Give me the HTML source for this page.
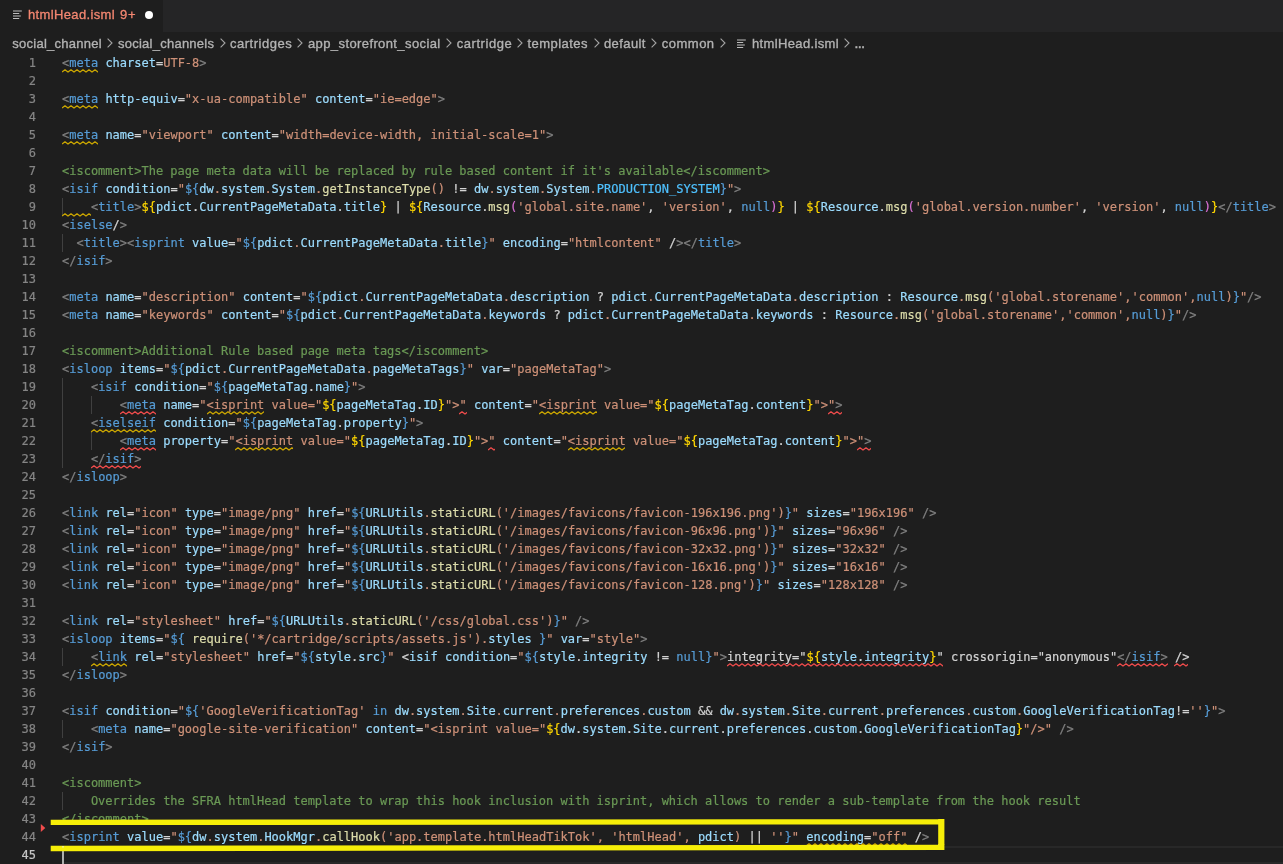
<!DOCTYPE html>
<html lang="en"><head><meta charset="utf-8"><title>htmlHead.isml</title>
<style>
html,body{margin:0;padding:0;background:#1e1e1e;}
body{width:1283px;height:864px;overflow:hidden;position:relative;font-family:"Liberation Sans",sans-serif;}
.tabs{will-change:transform;-webkit-text-stroke:0.3px;position:absolute;left:0;top:0;width:1283px;height:32px;background:#252526;}
.tab{position:absolute;left:0;top:0;width:163px;height:32px;background:#1e1e1e;}
.tab .nm{position:absolute;top:7px;font-size:13px;line-height:16px;color:#f48771;white-space:nowrap;}
.tab .bd{position:absolute;top:7px;font-size:13px;line-height:16px;color:#f48771;white-space:nowrap;}
.tab .dot{position:absolute;left:145px;top:11px;width:8px;height:8px;border-radius:50%;background:#fff;}
.ficon{position:absolute;}
.ficon b{position:absolute;left:0;height:1px;background:#c5c5c5;}
.crumbs{will-change:transform;-webkit-text-stroke:0.35px;position:absolute;left:0;top:32px;width:1283px;height:22px;font-size:13px;line-height:22px;color:#b2b2b2;white-space:nowrap;}
.crumbs span{position:absolute;top:1px;}
.editor{position:absolute;left:0;top:0;width:1283px;height:864px;font-family:"DejaVu Sans Mono","Liberation Mono",monospace;font-size:12px;will-change:transform;-webkit-text-stroke:0.2px;}
.row{position:absolute;left:0;width:1283px;height:18px;line-height:18px;white-space:pre;}
.ln{position:absolute;left:0;top:0;width:36px;text-align:right;color:#858585;}
.ln.cur{color:#c6c6c6;}
.cd{position:absolute;left:62px;top:0;color:#d4d4d4;letter-spacing:0px;}
.cd i{font-style:normal;}
.g{color:#808080}.t{color:#569cd6}.a{color:#9cdcfe}.s{color:#ce9178}.c{color:#6a9955}
.f{color:#dcdcaa}.y{color:#ffd700}.p{color:#da70d6}.k{color:#4fc1ff}
u{text-decoration:none;}
.ig{position:absolute;top:0;width:1px;height:18px;background:#404040;}
.curline{position:absolute;left:62px;top:846px;width:1221px;height:14px;border-top:2px solid #282828;border-bottom:2px solid #282828;}
.cursor{position:absolute;left:62px;top:846px;width:2px;height:18px;background:#aeafad;}
.hl{position:absolute;background:#f5ee0a;}
.sq{position:absolute;overflow:hidden;}
.chev{position:absolute;top:5.9px;overflow:visible;}
.fic{position:absolute;overflow:visible;}
.ov{position:absolute;left:0;top:0;pointer-events:none;}
</style></head>
<body>
<div class="tabs"><div class="tab">
<svg class="fic" style="left:13.2px;top:9.6px" width="10" height="10" viewBox="0 0 10 10"><path d="M0 1H8.8M0 3.5H6.2M0 6H7.8M0 8.5H6.2" fill="none" stroke="#bdbdbd" stroke-width="1.15"/></svg>
<span class="nm" style="left:28px;letter-spacing:0.362px">htmlHead.isml</span><span class="bd" style="left:120px;letter-spacing:0.878px">9+</span><span class="dot"></span>
</div></div>
<div class="crumbs"><span style="left:12.3px;letter-spacing:0.262px">social_channel</span><svg class="chev" style="left:107px" width="6" height="10" viewBox="0 0 6 10"><path d="M0.6 0.6 L5 5 L0.6 9.4" fill="none" stroke="#a4a4a4" stroke-width="1.1"/></svg><span style="left:117.9px;letter-spacing:0.257px">social_channels</span><svg class="chev" style="left:220px" width="6" height="10" viewBox="0 0 6 10"><path d="M0.6 0.6 L5 5 L0.6 9.4" fill="none" stroke="#a4a4a4" stroke-width="1.1"/></svg><span style="left:230px;letter-spacing:0.514px">cartridges</span><svg class="chev" style="left:297.4px" width="6" height="10" viewBox="0 0 6 10"><path d="M0.6 0.6 L5 5 L0.6 9.4" fill="none" stroke="#a4a4a4" stroke-width="1.1"/></svg><span style="left:308px;letter-spacing:0.395px">app_storefront_social</span><svg class="chev" style="left:445.8px" width="6" height="10" viewBox="0 0 6 10"><path d="M0.6 0.6 L5 5 L0.6 9.4" fill="none" stroke="#a4a4a4" stroke-width="1.1"/></svg><span style="left:456.7px;letter-spacing:0.553px">cartridge</span><svg class="chev" style="left:517px" width="6" height="10" viewBox="0 0 6 10"><path d="M0.6 0.6 L5 5 L0.6 9.4" fill="none" stroke="#a4a4a4" stroke-width="1.1"/></svg><span style="left:527.5px;letter-spacing:0.455px">templates</span><svg class="chev" style="left:593.5px" width="6" height="10" viewBox="0 0 6 10"><path d="M0.6 0.6 L5 5 L0.6 9.4" fill="none" stroke="#a4a4a4" stroke-width="1.1"/></svg><span style="left:604px;letter-spacing:0.395px">default</span><svg class="chev" style="left:651.3px" width="6" height="10" viewBox="0 0 6 10"><path d="M0.6 0.6 L5 5 L0.6 9.4" fill="none" stroke="#a4a4a4" stroke-width="1.1"/></svg><span style="left:661.8px;letter-spacing:0.490px">common</span><svg class="chev" style="left:719.7px" width="6" height="10" viewBox="0 0 6 10"><path d="M0.6 0.6 L5 5 L0.6 9.4" fill="none" stroke="#a4a4a4" stroke-width="1.1"/></svg><svg class="fic" style="left:737.3px;top:6.6px" width="10" height="10" viewBox="0 0 10 10"><path d="M0 1H8.8M0 3.5H6.2M0 6H7.8M0 8.5H6.2" fill="none" stroke="#bdbdbd" stroke-width="1.15"/></svg><span style="left:752px;letter-spacing:0.362px">htmlHead.isml</span><svg class="chev" style="left:844.2px" width="6" height="10" viewBox="0 0 6 10"><path d="M0.6 0.6 L5 5 L0.6 9.4" fill="none" stroke="#a4a4a4" stroke-width="1.1"/></svg><span style="left:854.6px;font-size:10.5px;font-weight:bold">…</span></div>

<div class="editor">
<div class="row" style="top:54px"><span class="ln">1</span><span class="cd"><i class="g">&lt;</i><i class="t">meta</i> <i class="a">charset</i>=<i class="s">UTF-8</i><i class="g">&gt;</i></span></div>
<div class="row" style="top:72px"><span class="ln">2</span><span class="cd"></span></div>
<div class="row" style="top:90px"><span class="ln">3</span><span class="cd"><i class="g">&lt;</i><i class="t">meta</i> <i class="a">http-equiv</i>=<i class="s">"x-ua-compatible"</i> <i class="a">content</i>=<i class="s">"ie=edge"</i><i class="g">&gt;</i></span></div>
<div class="row" style="top:108px"><span class="ln">4</span><span class="cd"></span></div>
<div class="row" style="top:126px"><span class="ln">5</span><span class="cd"><i class="g">&lt;</i><i class="t">meta</i> <i class="a">name</i>=<i class="s">"viewport"</i> <i class="a">content</i>=<i class="s">"width=device-width, initial-scale=1"</i><i class="g">&gt;</i></span></div>
<div class="row" style="top:144px"><span class="ln">6</span><span class="cd"></span></div>
<div class="row" style="top:162px"><span class="ln">7</span><span class="cd"><i class="c">&lt;iscomment&gt;The page meta data will be replaced by rule based content if it's available&lt;/iscomment&gt;</i></span></div>
<div class="row" style="top:180px"><span class="ln">8</span><span class="cd"><i class="g">&lt;</i><i class="t">isif</i> <i class="a">condition</i>=<i class="s">"</i><i class="t">${</i><i class="a">dw</i><i class="s">.</i><i class="a">system</i><i class="s">.</i><i class="a">System</i><i class="s">.</i><i class="f">getInstanceType</i><i class="s">()</i> != <i class="a">dw</i><i class="s">.</i><i class="a">system</i><i class="s">.</i><i class="a">System</i><i class="s">.</i><i class="k">PRODUCTION_SYSTEM</i><i class="t">}</i><i class="s">"</i><i class="g">&gt;</i></span></div>
<div class="row" style="top:198px"><span class="ln">9</span><b class="ig" style="left:62px"></b><span class="cd">    <i class="g">&lt;</i><i class="t">title</i><i class="g">&gt;</i><i class="y">${</i><i class="a">pdict</i>.<i class="a">CurrentPageMetaData</i>.<i class="a">title</i><i class="y">}</i> | <i class="y">${</i><i class="a">Resource</i>.<i class="f">msg</i><i class="p">(</i><i class="s">'global.site.name'</i>, <i class="s">'version'</i>, <i class="t">null</i><i class="p">)</i><i class="y">}</i> | <i class="y">${</i><i class="a">Resource</i>.<i class="f">msg</i><i class="p">(</i><i class="s">'global.version.number'</i>, <i class="s">'version'</i>, <i class="t">null</i><i class="p">)</i><i class="y">}</i><i class="g">&lt;/</i><i class="t">title</i><i class="g">&gt;</i></span></div>
<div class="row" style="top:216px"><span class="ln">10</span><span class="cd"><i class="g">&lt;</i><i class="t">iselse</i>/<i class="g">&gt;</i></span></div>
<div class="row" style="top:234px"><span class="ln">11</span><b class="ig" style="left:62px"></b><span class="cd">  <i class="g">&lt;</i><i class="t">title</i><i class="g">&gt;</i><i class="g">&lt;</i><i class="t">isprint</i> <i class="a">value</i>=<i class="s">"</i><i class="t">${</i><i class="a">pdict</i><i class="s">.</i><i class="a">CurrentPageMetaData</i><i class="s">.</i><i class="a">title</i><i class="t">}</i><i class="s">"</i> <i class="a">encoding</i>=<i class="s">"htmlcontent"</i> /<i class="g">&gt;</i><i class="g">&lt;/</i><i class="t">title</i><i class="g">&gt;</i></span></div>
<div class="row" style="top:252px"><span class="ln">12</span><span class="cd"><i class="g">&lt;/</i><i class="t">isif</i><i class="g">&gt;</i></span></div>
<div class="row" style="top:270px"><span class="ln">13</span><span class="cd"></span></div>
<div class="row" style="top:288px"><span class="ln">14</span><span class="cd"><i class="g">&lt;</i><i class="t">meta</i> <i class="a">name</i>=<i class="s">"description"</i> <i class="a">content</i>=<i class="s">"</i><i class="t">${</i><i class="a">pdict</i><i class="s">.</i><i class="a">CurrentPageMetaData</i><i class="s">.</i><i class="a">description</i> ? <i class="a">pdict</i><i class="s">.</i><i class="a">CurrentPageMetaData</i><i class="s">.</i><i class="a">description</i> : <i class="a">Resource</i><i class="s">.</i><i class="f">msg</i><i class="s">('global.storename','common',</i><i class="t">null</i><i class="s">)</i><i class="t">}</i><i class="s">"</i><i class="g">/&gt;</i></span></div>
<div class="row" style="top:306px"><span class="ln">15</span><span class="cd"><i class="g">&lt;</i><i class="t">meta</i> <i class="a">name</i>=<i class="s">"keywords"</i> <i class="a">content</i>=<i class="s">"</i><i class="t">${</i><i class="a">pdict</i><i class="s">.</i><i class="a">CurrentPageMetaData</i><i class="s">.</i><i class="a">keywords</i> ? <i class="a">pdict</i><i class="s">.</i><i class="a">CurrentPageMetaData</i><i class="s">.</i><i class="a">keywords</i> : <i class="a">Resource</i><i class="s">.</i><i class="f">msg</i><i class="s">('global.storename','common',</i><i class="t">null</i><i class="s">)</i><i class="t">}</i><i class="s">"</i><i class="g">/&gt;</i></span></div>
<div class="row" style="top:324px"><span class="ln">16</span><span class="cd"></span></div>
<div class="row" style="top:342px"><span class="ln">17</span><span class="cd"><i class="c">&lt;iscomment&gt;Additional Rule based page meta tags&lt;/iscomment&gt;</i></span></div>
<div class="row" style="top:360px"><span class="ln">18</span><span class="cd"><i class="g">&lt;</i><i class="t">isloop</i> <i class="a">items</i>=<i class="s">"</i><i class="t">${</i><i class="a">pdict</i><i class="s">.</i><i class="a">CurrentPageMetaData</i><i class="s">.</i><i class="a">pageMetaTags</i><i class="t">}</i><i class="s">"</i> <i class="a">var</i>=<i class="s">"pageMetaTag"</i><i class="g">&gt;</i></span></div>
<div class="row" style="top:378px"><span class="ln">19</span><b class="ig" style="left:62px"></b><span class="cd">    <i class="g">&lt;</i><i class="t">isif</i> <i class="a">condition</i>=<i class="s">"</i><i class="t">${</i><i class="a">pageMetaTag</i>.<i class="a">name</i><i class="t">}</i><i class="s">"</i><i class="g">&gt;</i></span></div>
<div class="row" style="top:396px"><span class="ln">20</span><b class="ig" style="left:62px"></b><b class="ig" style="left:91px"></b><span class="cd">        <i class="g">&lt;</i><i class="t">meta</i> <i class="a">name</i>=<i class="s">"</i><i class="s">&lt;isprint</i><i class="s"> value="</i><i class="y">${</i><i class="a">pageMetaTag</i>.<i class="a">ID</i><i class="y">}</i><i class="s">"&gt;</i><i class="s">"</i> <i class="a">content</i>=<i class="s">"</i><i class="s">&lt;isprint</i><i class="s"> value="</i><i class="y">${</i><i class="a">pageMetaTag</i>.<i class="a">content</i><i class="y">}</i><i class="s">"&gt;</i><i class="s">"</i><i class="g">&gt;</i></span></div>
<div class="row" style="top:414px"><span class="ln">21</span><b class="ig" style="left:62px"></b><span class="cd">    <i class="g">&lt;</i><i class="t">iselseif</i> <i class="a">condition</i>=<i class="s">"</i><i class="t">${</i><i class="a">pageMetaTag</i>.<i class="a">property</i><i class="t">}</i><i class="s">"</i><i class="g">&gt;</i></span></div>
<div class="row" style="top:432px"><span class="ln">22</span><b class="ig" style="left:62px"></b><b class="ig" style="left:91px"></b><span class="cd">        <i class="g">&lt;</i><i class="t">meta</i> <i class="a">property</i>=<i class="s">"</i><i class="s">&lt;isprint</i><i class="s"> value="</i><i class="y">${</i><i class="a">pageMetaTag</i>.<i class="a">ID</i><i class="y">}</i><i class="s">"&gt;</i><i class="s">"</i> <i class="a">content</i>=<i class="s">"</i><i class="s">&lt;isprint</i><i class="s"> value="</i><i class="y">${</i><i class="a">pageMetaTag</i>.<i class="a">content</i><i class="y">}</i><i class="s">"&gt;</i><i class="s">"</i><i class="g">&gt;</i></span></div>
<div class="row" style="top:450px"><span class="ln">23</span><b class="ig" style="left:62px"></b><span class="cd">    <i class="g">&lt;/</i><i class="t">isif</i><i class="g">&gt;</i></span></div>
<div class="row" style="top:468px"><span class="ln">24</span><span class="cd"><i class="g">&lt;/</i><i class="t">isloop</i><i class="g">&gt;</i></span></div>
<div class="row" style="top:486px"><span class="ln">25</span><span class="cd"></span></div>
<div class="row" style="top:504px"><span class="ln">26</span><span class="cd"><i class="g">&lt;</i><i class="t">link</i> <i class="a">rel</i>=<i class="s">"icon"</i> <i class="a">type</i>=<i class="s">"image/png"</i> <i class="a">href</i>=<i class="s">"</i><i class="t">${</i><i class="a">URLUtils</i><i class="s">.</i><i class="f">staticURL</i><i class="s">('/images/favicons/favicon-196x196.png')</i><i class="t">}</i><i class="s">"</i> <i class="a">sizes</i>=<i class="s">"196x196"</i><i class="g"> /&gt;</i></span></div>
<div class="row" style="top:522px"><span class="ln">27</span><span class="cd"><i class="g">&lt;</i><i class="t">link</i> <i class="a">rel</i>=<i class="s">"icon"</i> <i class="a">type</i>=<i class="s">"image/png"</i> <i class="a">href</i>=<i class="s">"</i><i class="t">${</i><i class="a">URLUtils</i><i class="s">.</i><i class="f">staticURL</i><i class="s">('/images/favicons/favicon-96x96.png')</i><i class="t">}</i><i class="s">"</i> <i class="a">sizes</i>=<i class="s">"96x96"</i><i class="g"> /&gt;</i></span></div>
<div class="row" style="top:540px"><span class="ln">28</span><span class="cd"><i class="g">&lt;</i><i class="t">link</i> <i class="a">rel</i>=<i class="s">"icon"</i> <i class="a">type</i>=<i class="s">"image/png"</i> <i class="a">href</i>=<i class="s">"</i><i class="t">${</i><i class="a">URLUtils</i><i class="s">.</i><i class="f">staticURL</i><i class="s">('/images/favicons/favicon-32x32.png')</i><i class="t">}</i><i class="s">"</i> <i class="a">sizes</i>=<i class="s">"32x32"</i><i class="g"> /&gt;</i></span></div>
<div class="row" style="top:558px"><span class="ln">29</span><span class="cd"><i class="g">&lt;</i><i class="t">link</i> <i class="a">rel</i>=<i class="s">"icon"</i> <i class="a">type</i>=<i class="s">"image/png"</i> <i class="a">href</i>=<i class="s">"</i><i class="t">${</i><i class="a">URLUtils</i><i class="s">.</i><i class="f">staticURL</i><i class="s">('/images/favicons/favicon-16x16.png')</i><i class="t">}</i><i class="s">"</i> <i class="a">sizes</i>=<i class="s">"16x16"</i><i class="g"> /&gt;</i></span></div>
<div class="row" style="top:576px"><span class="ln">30</span><span class="cd"><i class="g">&lt;</i><i class="t">link</i> <i class="a">rel</i>=<i class="s">"icon"</i> <i class="a">type</i>=<i class="s">"image/png"</i> <i class="a">href</i>=<i class="s">"</i><i class="t">${</i><i class="a">URLUtils</i><i class="s">.</i><i class="f">staticURL</i><i class="s">('/images/favicons/favicon-128.png')</i><i class="t">}</i><i class="s">"</i> <i class="a">sizes</i>=<i class="s">"128x128"</i><i class="g"> /&gt;</i></span></div>
<div class="row" style="top:594px"><span class="ln">31</span><span class="cd"></span></div>
<div class="row" style="top:612px"><span class="ln">32</span><span class="cd"><i class="g">&lt;</i><i class="t">link</i> <i class="a">rel</i>=<i class="s">"stylesheet"</i> <i class="a">href</i>=<i class="s">"</i><i class="t">${</i><i class="a">URLUtils</i><i class="s">.</i><i class="f">staticURL</i><i class="s">('/css/global.css')</i><i class="t">}</i><i class="s">"</i><i class="g"> /&gt;</i></span></div>
<div class="row" style="top:630px"><span class="ln">33</span><span class="cd"><i class="g">&lt;</i><i class="t">isloop</i> <i class="a">items</i>=<i class="s">"</i><i class="t">${</i> <i class="f">require</i><i class="s">('*/cartridge/scripts/assets.js').</i><i class="a">styles</i> <i class="t">}</i><i class="s">"</i> <i class="a">var</i>=<i class="s">"style"</i><i class="g">&gt;</i></span></div>
<div class="row" style="top:648px"><span class="ln">34</span><b class="ig" style="left:62px"></b><span class="cd">    <i class="g">&lt;</i><i class="t">link</i> <i class="a">rel</i>=<i class="s">"stylesheet"</i> <i class="a">href</i>=<i class="s">"</i><i class="t">${</i><i class="a">style</i>.<i class="a">src</i><i class="t">}</i><i class="s">"</i> &lt;<i class="a">isif</i> <i class="a">condition</i>=<i class="s">"</i><i class="t">${</i><i class="a">style</i>.<i class="a">integrity</i> != <i class="t">null</i><i class="t">}</i><i class="s">"</i><i class="g">&gt;</i>integrity="<i class="y">${</i><i class="a">style</i>.<i class="a">integrity</i><i class="y">}</i>" crossorigin="anonymous"<i class="g">&lt;/</i><i class="t">isif</i><i class="g">&gt;</i> /&gt;</span></div>
<div class="row" style="top:666px"><span class="ln">35</span><span class="cd"><i class="g">&lt;/</i><i class="t">isloop</i><i class="g">&gt;</i></span></div>
<div class="row" style="top:684px"><span class="ln">36</span><span class="cd"></span></div>
<div class="row" style="top:702px"><span class="ln">37</span><span class="cd"><i class="g">&lt;</i><i class="t">isif</i> <i class="a">condition</i>=<i class="s">"</i><i class="t">${</i><i class="s">'GoogleVerificationTag'</i> <i class="t">in</i> <i class="a">dw</i><i class="s">.</i><i class="a">system</i><i class="s">.</i><i class="a">Site</i><i class="s">.</i><i class="a">current</i><i class="s">.</i><i class="a">preferences</i><i class="s">.</i><i class="a">custom</i> &amp;&amp; <i class="a">dw</i><i class="s">.</i><i class="a">system</i><i class="s">.</i><i class="a">Site</i><i class="s">.</i><i class="a">current</i><i class="s">.</i><i class="a">preferences</i><i class="s">.</i><i class="a">custom</i><i class="s">.</i><i class="a">GoogleVerificationTag</i>!=<i class="s">''</i><i class="t">}</i><i class="s">"</i><i class="g">&gt;</i></span></div>
<div class="row" style="top:720px"><span class="ln">38</span><b class="ig" style="left:62px"></b><span class="cd">    <i class="g">&lt;</i><i class="t">meta</i> <i class="a">name</i>=<i class="s">"google-site-verification"</i> <i class="a">content</i>=<i class="s">"&lt;isprint value="</i><i class="y">${</i><i class="a">dw</i>.<i class="a">system</i>.<i class="a">Site</i>.<i class="a">current</i>.<i class="a">preferences</i>.<i class="a">custom</i>.<i class="a">GoogleVerificationTag</i><i class="y">}</i><i class="s">"/&gt;"</i><i class="g"> /&gt;</i></span></div>
<div class="row" style="top:738px"><span class="ln">39</span><span class="cd"><i class="g">&lt;/</i><i class="t">isif</i><i class="g">&gt;</i></span></div>
<div class="row" style="top:756px"><span class="ln">40</span><span class="cd"></span></div>
<div class="row" style="top:774px"><span class="ln">41</span><span class="cd"><i class="c">&lt;iscomment&gt;</i></span></div>
<div class="row" style="top:792px"><span class="ln">42</span><b class="ig" style="left:62px"></b><span class="cd"><i class="c">    Overrides the SFRA htmlHead template to wrap this hook inclusion with isprint, which allows to render a sub-template from the hook result</i></span></div>
<div class="row" style="top:810px"><span class="ln">43</span><span class="cd"><i class="c">&lt;/iscomment&gt;</i></span></div>
<div class="row" style="top:828px"><span class="ln">44</span><span class="cd"><i class="g">&lt;</i><i class="t">isprint</i> <i class="a">value</i>=<i class="s">"</i><i class="t">${</i><i class="a">dw</i><i class="s">.</i><i class="a">system</i><i class="s">.</i><i class="a">HookMgr</i><i class="s">.</i><i class="f">callHook</i><i class="s">('app.template.htmlHeadTikTok', 'htmlHead', </i><i class="a">pdict</i><i class="s">)</i> || <i class="s">''</i><i class="t">}</i><i class="s">"</i> <i class="a">encoding</i>=<i class="s">"off"</i> /<i class="g">&gt;</i></span></div>
<div class="row" style="top:846px"><span class="ln cur">45</span><span class="cd"></span></div>
<svg class="sq" style="left:62px;top:68.6px" width="36.12" height="4" viewBox="0 0 36.12 4"><path d="M0 3.0 L3 0.8 L6 3.0 L9 0.8 L12 3.0 L15 0.8 L18 3.0 L21 0.8 L24 3.0 L27 0.8 L30 3.0 L33 0.8 L36 3.0 L39 0.8" fill="none" stroke="#cca700" stroke-width="1.3" stroke-linejoin="round"/></svg><svg class="sq" style="left:62px;top:104.6px" width="36.12" height="4" viewBox="0 0 36.12 4"><path d="M0 3.0 L3 0.8 L6 3.0 L9 0.8 L12 3.0 L15 0.8 L18 3.0 L21 0.8 L24 3.0 L27 0.8 L30 3.0 L33 0.8 L36 3.0 L39 0.8" fill="none" stroke="#cca700" stroke-width="1.3" stroke-linejoin="round"/></svg><svg class="sq" style="left:62px;top:140.6px" width="36.12" height="4" viewBox="0 0 36.12 4"><path d="M0 3.0 L3 0.8 L6 3.0 L9 0.8 L12 3.0 L15 0.8 L18 3.0 L21 0.8 L24 3.0 L27 0.8 L30 3.0 L33 0.8 L36 3.0 L39 0.8" fill="none" stroke="#cca700" stroke-width="1.3" stroke-linejoin="round"/></svg><svg class="sq" style="left:62px;top:212.6px" width="28.9" height="4" viewBox="0 0 28.9 4"><path d="M0 3.0 L3 0.8 L6 3.0 L9 0.8 L12 3.0 L15 0.8 L18 3.0 L21 0.8 L24 3.0 L27 0.8 L30 3.0" fill="none" stroke="#cca700" stroke-width="1.3" stroke-linejoin="round"/></svg><svg class="sq" style="left:119.8px;top:410.6px" width="36.12" height="4" viewBox="0 0 36.12 4"><path d="M0 3.0 L3 0.8 L6 3.0 L9 0.8 L12 3.0 L15 0.8 L18 3.0 L21 0.8 L24 3.0 L27 0.8 L30 3.0 L33 0.8 L36 3.0 L39 0.8" fill="none" stroke="#f14c4c" stroke-width="1.3" stroke-linejoin="round"/></svg><svg class="sq" style="left:206.5px;top:410.6px" width="57.79" height="4" viewBox="0 0 57.79 4"><path d="M0 3.0 L3 0.8 L6 3.0 L9 0.8 L12 3.0 L15 0.8 L18 3.0 L21 0.8 L24 3.0 L27 0.8 L30 3.0 L33 0.8 L36 3.0 L39 0.8 L42 3.0 L45 0.8 L48 3.0 L51 0.8 L54 3.0 L57 0.8 L60 3.0" fill="none" stroke="#cca700" stroke-width="1.3" stroke-linejoin="round"/></svg><svg class="sq" style="left:459.3px;top:410.6px" width="7.224" height="4" viewBox="0 0 7.224 4"><path d="M0 3.0 L3 0.8 L6 3.0 L9 0.8" fill="none" stroke="#f14c4c" stroke-width="1.3" stroke-linejoin="round"/></svg><svg class="sq" style="left:538.8px;top:410.6px" width="57.79" height="4" viewBox="0 0 57.79 4"><path d="M0 3.0 L3 0.8 L6 3.0 L9 0.8 L12 3.0 L15 0.8 L18 3.0 L21 0.8 L24 3.0 L27 0.8 L30 3.0 L33 0.8 L36 3.0 L39 0.8 L42 3.0 L45 0.8 L48 3.0 L51 0.8 L54 3.0 L57 0.8 L60 3.0" fill="none" stroke="#cca700" stroke-width="1.3" stroke-linejoin="round"/></svg><svg class="sq" style="left:827.7px;top:410.6px" width="14.45" height="4" viewBox="0 0 14.45 4"><path d="M0 3.0 L3 0.8 L6 3.0 L9 0.8 L12 3.0 L15 0.8" fill="none" stroke="#f14c4c" stroke-width="1.3" stroke-linejoin="round"/></svg><svg class="sq" style="left:90.9px;top:428.6px" width="65.02" height="4" viewBox="0 0 65.02 4"><path d="M0 3.0 L3 0.8 L6 3.0 L9 0.8 L12 3.0 L15 0.8 L18 3.0 L21 0.8 L24 3.0 L27 0.8 L30 3.0 L33 0.8 L36 3.0 L39 0.8 L42 3.0 L45 0.8 L48 3.0 L51 0.8 L54 3.0 L57 0.8 L60 3.0 L63 0.8 L66 3.0" fill="none" stroke="#cca700" stroke-width="1.3" stroke-linejoin="round"/></svg><svg class="sq" style="left:119.8px;top:446.6px" width="36.12" height="4" viewBox="0 0 36.12 4"><path d="M0 3.0 L3 0.8 L6 3.0 L9 0.8 L12 3.0 L15 0.8 L18 3.0 L21 0.8 L24 3.0 L27 0.8 L30 3.0 L33 0.8 L36 3.0 L39 0.8" fill="none" stroke="#f14c4c" stroke-width="1.3" stroke-linejoin="round"/></svg><svg class="sq" style="left:235.4px;top:446.6px" width="57.79" height="4" viewBox="0 0 57.79 4"><path d="M0 3.0 L3 0.8 L6 3.0 L9 0.8 L12 3.0 L15 0.8 L18 3.0 L21 0.8 L24 3.0 L27 0.8 L30 3.0 L33 0.8 L36 3.0 L39 0.8 L42 3.0 L45 0.8 L48 3.0 L51 0.8 L54 3.0 L57 0.8 L60 3.0" fill="none" stroke="#cca700" stroke-width="1.3" stroke-linejoin="round"/></svg><svg class="sq" style="left:488.2px;top:446.6px" width="7.224" height="4" viewBox="0 0 7.224 4"><path d="M0 3.0 L3 0.8 L6 3.0 L9 0.8" fill="none" stroke="#f14c4c" stroke-width="1.3" stroke-linejoin="round"/></svg><svg class="sq" style="left:567.7px;top:446.6px" width="57.79" height="4" viewBox="0 0 57.79 4"><path d="M0 3.0 L3 0.8 L6 3.0 L9 0.8 L12 3.0 L15 0.8 L18 3.0 L21 0.8 L24 3.0 L27 0.8 L30 3.0 L33 0.8 L36 3.0 L39 0.8 L42 3.0 L45 0.8 L48 3.0 L51 0.8 L54 3.0 L57 0.8 L60 3.0" fill="none" stroke="#cca700" stroke-width="1.3" stroke-linejoin="round"/></svg><svg class="sq" style="left:856.6px;top:446.6px" width="14.45" height="4" viewBox="0 0 14.45 4"><path d="M0 3.0 L3 0.8 L6 3.0 L9 0.8 L12 3.0 L15 0.8" fill="none" stroke="#f14c4c" stroke-width="1.3" stroke-linejoin="round"/></svg><svg class="sq" style="left:90.9px;top:464.6px" width="50.57" height="4" viewBox="0 0 50.57 4"><path d="M0 3.0 L3 0.8 L6 3.0 L9 0.8 L12 3.0 L15 0.8 L18 3.0 L21 0.8 L24 3.0 L27 0.8 L30 3.0 L33 0.8 L36 3.0 L39 0.8 L42 3.0 L45 0.8 L48 3.0 L51 0.8" fill="none" stroke="#f14c4c" stroke-width="1.3" stroke-linejoin="round"/></svg><svg class="sq" style="left:90.9px;top:662.6px" width="36.12" height="4" viewBox="0 0 36.12 4"><path d="M0 3.0 L3 0.8 L6 3.0 L9 0.8 L12 3.0 L15 0.8 L18 3.0 L21 0.8 L24 3.0 L27 0.8 L30 3.0 L33 0.8 L36 3.0 L39 0.8" fill="none" stroke="#cca700" stroke-width="1.3" stroke-linejoin="round"/></svg><svg class="sq" style="left:726.6px;top:662.6px" width="216.7" height="4" viewBox="0 0 216.7 4"><path d="M0 3.0 L3 0.8 L6 3.0 L9 0.8 L12 3.0 L15 0.8 L18 3.0 L21 0.8 L24 3.0 L27 0.8 L30 3.0 L33 0.8 L36 3.0 L39 0.8 L42 3.0 L45 0.8 L48 3.0 L51 0.8 L54 3.0 L57 0.8 L60 3.0 L63 0.8 L66 3.0 L69 0.8 L72 3.0 L75 0.8 L78 3.0 L81 0.8 L84 3.0 L87 0.8 L90 3.0 L93 0.8 L96 3.0 L99 0.8 L102 3.0 L105 0.8 L108 3.0 L111 0.8 L114 3.0 L117 0.8 L120 3.0 L123 0.8 L126 3.0 L129 0.8 L132 3.0 L135 0.8 L138 3.0 L141 0.8 L144 3.0 L147 0.8 L150 3.0 L153 0.8 L156 3.0 L159 0.8 L162 3.0 L165 0.8 L168 3.0 L171 0.8 L174 3.0 L177 0.8 L180 3.0 L183 0.8 L186 3.0 L189 0.8 L192 3.0 L195 0.8 L198 3.0 L201 0.8 L204 3.0 L207 0.8 L210 3.0 L213 0.8 L216 3.0 L219 0.8" fill="none" stroke="#f14c4c" stroke-width="1.3" stroke-linejoin="round"/></svg><svg class="sq" style="left:1117px;top:662.6px" width="50.57" height="4" viewBox="0 0 50.57 4"><path d="M0 3.0 L3 0.8 L6 3.0 L9 0.8 L12 3.0 L15 0.8 L18 3.0 L21 0.8 L24 3.0 L27 0.8 L30 3.0 L33 0.8 L36 3.0 L39 0.8 L42 3.0 L45 0.8 L48 3.0 L51 0.8" fill="none" stroke="#f14c4c" stroke-width="1.3" stroke-linejoin="round"/></svg><svg class="sq" style="left:1174px;top:662.6px" width="14.45" height="4" viewBox="0 0 14.45 4"><path d="M0 3.0 L3 0.8 L6 3.0 L9 0.8 L12 3.0 L15 0.8" fill="none" stroke="#f14c4c" stroke-width="1.3" stroke-linejoin="round"/></svg><svg class="sq" style="left:806.1px;top:842.6px" width="101.1" height="4" viewBox="0 0 101.1 4"><path d="M0 3.0 L3 0.8 L6 3.0 L9 0.8 L12 3.0 L15 0.8 L18 3.0 L21 0.8 L24 3.0 L27 0.8 L30 3.0 L33 0.8 L36 3.0 L39 0.8 L42 3.0 L45 0.8 L48 3.0 L51 0.8 L54 3.0 L57 0.8 L60 3.0 L63 0.8 L66 3.0 L69 0.8 L72 3.0 L75 0.8 L78 3.0 L81 0.8 L84 3.0 L87 0.8 L90 3.0 L93 0.8 L96 3.0 L99 0.8 L102 3.0" fill="none" stroke="#cca700" stroke-width="1.3" stroke-linejoin="round"/></svg>
<div class="curline"></div><div class="cursor"></div>
<svg class="ov" width="1283" height="864" viewBox="0 0 1283 864">
<path d="M40.8 824 L45.3 828 L40.8 832.1 Z" fill="#f14c4c"/>
<path d="M50.7 819.8 L944.4 819 L944.4 824.4 L50.7 825.1 Z M50.7 845.8 L944.4 844.8 L944.4 850 L50.7 851.2 Z M938.2 819 H944.4 V850 H938.2 Z" fill="#f6ee08"/>
<rect x="62" y="846" width="2" height="1.6" fill="#f4f080"/>
</svg>
</div>
</body></html>
